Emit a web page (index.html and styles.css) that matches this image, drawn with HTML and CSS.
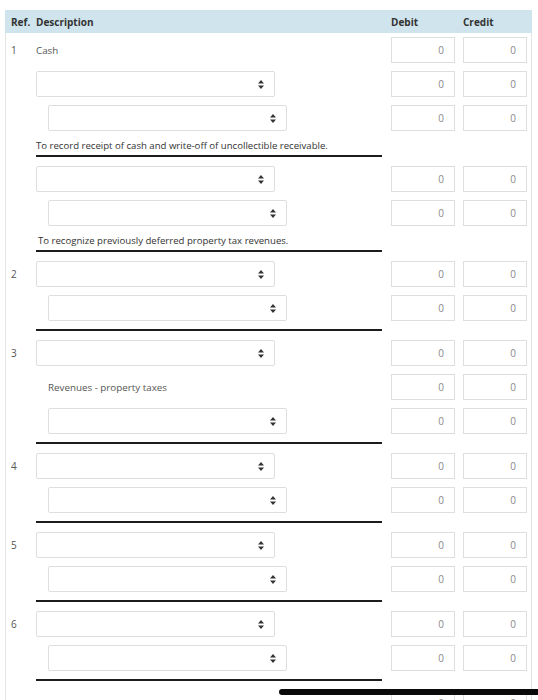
FILE: index.html
```html
<!DOCTYPE html>
<html>
<head>
<meta charset="utf-8">
<link rel="stylesheet" href="styles.css">
</head>
<body>
<div class="sheet">
  <div class="head">
    <div class="c-ref">Ref.</div>
    <div class="c-desc">Description</div>
    <div class="c-amt">Debit</div>
    <div class="c-amt">Credit</div>
  </div>
  <div class="body">
    <div class="row"><div class="c-ref">1</div><div class="c-desc"><span class="acct">Cash</span></div><input class="amt" value="0"><input class="amt" value="0"></div>
    <div class="row"><div class="c-ref"></div><div class="c-desc"><div class="sel"><svg width="6" height="9" viewBox="0 0 6 9"><path d="M0 3.6L3 0L6 3.6Z M0 5.4L6 5.4L3 9Z" fill="#333"/></svg></div></div><input class="amt" value="0"><input class="amt" value="0"></div>
    <div class="row"><div class="c-ref"></div><div class="c-desc"><div class="sel in"><svg width="6" height="9" viewBox="0 0 6 9"><path d="M0 3.6L3 0L6 3.6Z M0 5.4L6 5.4L3 9Z" fill="#333"/></svg></div></div><input class="amt" value="0"><input class="amt" value="0"></div>
    <div class="memo">To record receipt of cash and write-off of uncollectible receivable.</div>
    <div class="rule"></div>

    <div class="row"><div class="c-ref"></div><div class="c-desc"><div class="sel"><svg width="6" height="9" viewBox="0 0 6 9"><path d="M0 3.6L3 0L6 3.6Z M0 5.4L6 5.4L3 9Z" fill="#333"/></svg></div></div><input class="amt" value="0"><input class="amt" value="0"></div>
    <div class="row"><div class="c-ref"></div><div class="c-desc"><div class="sel in"><svg width="6" height="9" viewBox="0 0 6 9"><path d="M0 3.6L3 0L6 3.6Z M0 5.4L6 5.4L3 9Z" fill="#333"/></svg></div></div><input class="amt" value="0"><input class="amt" value="0"></div>
    <div class="memo shift">To recognize previously deferred property tax revenues.</div>
    <div class="rule"></div>

    <div class="row"><div class="c-ref">2</div><div class="c-desc"><div class="sel"><svg width="6" height="9" viewBox="0 0 6 9"><path d="M0 3.6L3 0L6 3.6Z M0 5.4L6 5.4L3 9Z" fill="#333"/></svg></div></div><input class="amt" value="0"><input class="amt" value="0"></div>
    <div class="row"><div class="c-ref"></div><div class="c-desc"><div class="sel in"><svg width="6" height="9" viewBox="0 0 6 9"><path d="M0 3.6L3 0L6 3.6Z M0 5.4L6 5.4L3 9Z" fill="#333"/></svg></div></div><input class="amt" value="0"><input class="amt" value="0"></div>
    <div class="rule"></div>

    <div class="row"><div class="c-ref">3</div><div class="c-desc"><div class="sel"><svg width="6" height="9" viewBox="0 0 6 9"><path d="M0 3.6L3 0L6 3.6Z M0 5.4L6 5.4L3 9Z" fill="#333"/></svg></div></div><input class="amt" value="0"><input class="amt" value="0"></div>
    <div class="row"><div class="c-ref"></div><div class="c-desc"><span class="acct in">Revenues - property taxes</span></div><input class="amt" value="0"><input class="amt" value="0"></div>
    <div class="row"><div class="c-ref"></div><div class="c-desc"><div class="sel in"><svg width="6" height="9" viewBox="0 0 6 9"><path d="M0 3.6L3 0L6 3.6Z M0 5.4L6 5.4L3 9Z" fill="#333"/></svg></div></div><input class="amt" value="0"><input class="amt" value="0"></div>
    <div class="rule"></div>

    <div class="row"><div class="c-ref">4</div><div class="c-desc"><div class="sel"><svg width="6" height="9" viewBox="0 0 6 9"><path d="M0 3.6L3 0L6 3.6Z M0 5.4L6 5.4L3 9Z" fill="#333"/></svg></div></div><input class="amt" value="0"><input class="amt" value="0"></div>
    <div class="row"><div class="c-ref"></div><div class="c-desc"><div class="sel in"><svg width="6" height="9" viewBox="0 0 6 9"><path d="M0 3.6L3 0L6 3.6Z M0 5.4L6 5.4L3 9Z" fill="#333"/></svg></div></div><input class="amt" value="0"><input class="amt" value="0"></div>
    <div class="rule"></div>

    <div class="row"><div class="c-ref">5</div><div class="c-desc"><div class="sel"><svg width="6" height="9" viewBox="0 0 6 9"><path d="M0 3.6L3 0L6 3.6Z M0 5.4L6 5.4L3 9Z" fill="#333"/></svg></div></div><input class="amt" value="0"><input class="amt" value="0"></div>
    <div class="row"><div class="c-ref"></div><div class="c-desc"><div class="sel in"><svg width="6" height="9" viewBox="0 0 6 9"><path d="M0 3.6L3 0L6 3.6Z M0 5.4L6 5.4L3 9Z" fill="#333"/></svg></div></div><input class="amt" value="0"><input class="amt" value="0"></div>
    <div class="rule"></div>

    <div class="row"><div class="c-ref">6</div><div class="c-desc"><div class="sel"><svg width="6" height="9" viewBox="0 0 6 9"><path d="M0 3.6L3 0L6 3.6Z M0 5.4L6 5.4L3 9Z" fill="#333"/></svg></div></div><input class="amt" value="0"><input class="amt" value="0"></div>
    <div class="row"><div class="c-ref"></div><div class="c-desc"><div class="sel in"><svg width="6" height="9" viewBox="0 0 6 9"><path d="M0 3.6L3 0L6 3.6Z M0 5.4L6 5.4L3 9Z" fill="#333"/></svg></div></div><input class="amt" value="0"><input class="amt" value="0"></div>
    <div class="rule"></div>

    <div class="row tail"><div class="c-ref"></div><div class="c-desc"></div><input class="amt" value="0"><input class="amt" value="0"></div>
  </div>
</div>
<div class="thumb"></div>
</body>
</html>
```

FILE: styles.css
```css
html, body {
  margin: 0;
  padding: 0;
  background: #ffffff;
  overflow: hidden;
}
body {
  font-family: "Open Sans", "Liberation Sans", sans-serif;
  font-size: 10px;
  color: #555;
  height: 700px;
}
.sheet {
  margin: 10px 0 0 5px;
  width: 527px;
}
.head {
  display: flex;
  align-items: center;
  height: 23px;
  background: #cfe4ec;
  border-left: 1px solid #cfe4ec;
  border-right: 1px solid #cfe4ec;
  font-weight: 700;
  color: #333;
  font-size: 10px;
}
.body {
  border-left: 1px solid #e4e4e4;
  border-right: 1px solid #e4e4e4;
  padding-top: 4px;
}
.c-ref {
  width: 30px;
  padding-left: 5px;
  box-sizing: border-box;
  flex: none;
}
.c-desc {
  width: 346px;
  margin-right: 9px;
  flex: none;
}
.head .c-amt {
  width: 64px;
  flex: none;
}
.head .c-amt + .c-amt {
  margin-left: 8px;
}
.row {
  display: flex;
  align-items: center;
  height: 26px;
  margin-bottom: 8px;
}
.row.tail {
  margin-top: 2px;
}
.row .c-ref {
  color: #555;
}
.acct {
  color: #555;
  font-size: 9.8px;
}
.acct.in {
  margin-left: 12px;
}
.sel {
  width: 239px;
  height: 26px;
  box-sizing: border-box;
  border: 1px solid #dedede;
  border-radius: 2px;
  background: #fff;
  display: flex;
  align-items: center;
  justify-content: flex-end;
  padding-right: 10px;
}
.sel.in {
  margin-left: 12px;
}
.sel svg {
  display: block;
}
.amt {
  width: 64px;
  height: 26px;
  box-sizing: border-box;
  margin: 0;
  border: 1px solid #dedede;
  border-radius: 0;
  background: #fff;
  padding: 0 10px 0 0;
  text-align: right;
  font-family: "Open Sans", "Liberation Sans", sans-serif;
  font-size: 10px;
  color: #888;
  flex: none;
}
.amt + .amt {
  margin-left: 8px;
}
.memo {
  margin-left: 30px;
  font-size: 9.6px;
  line-height: 14px;
  height: 14px;
  color: #333;
  margin-bottom: 2px;
  white-space: nowrap;
}
.memo.shift {
  padding-left: 2px;
}
.rule {
  margin-left: 30px;
  width: 346px;
  height: 2px;
  background: #1c1c1c;
  margin-top: 2px;
  margin-bottom: 9px;
}
.memo + .rule {
  margin-top: 0;
}
.thumb {
  position: fixed;
  left: 279px;
  top: 689px;
  width: 270px;
  height: 6px;
  border-radius: 3px;
  background: #0a0a0a;
}
```
